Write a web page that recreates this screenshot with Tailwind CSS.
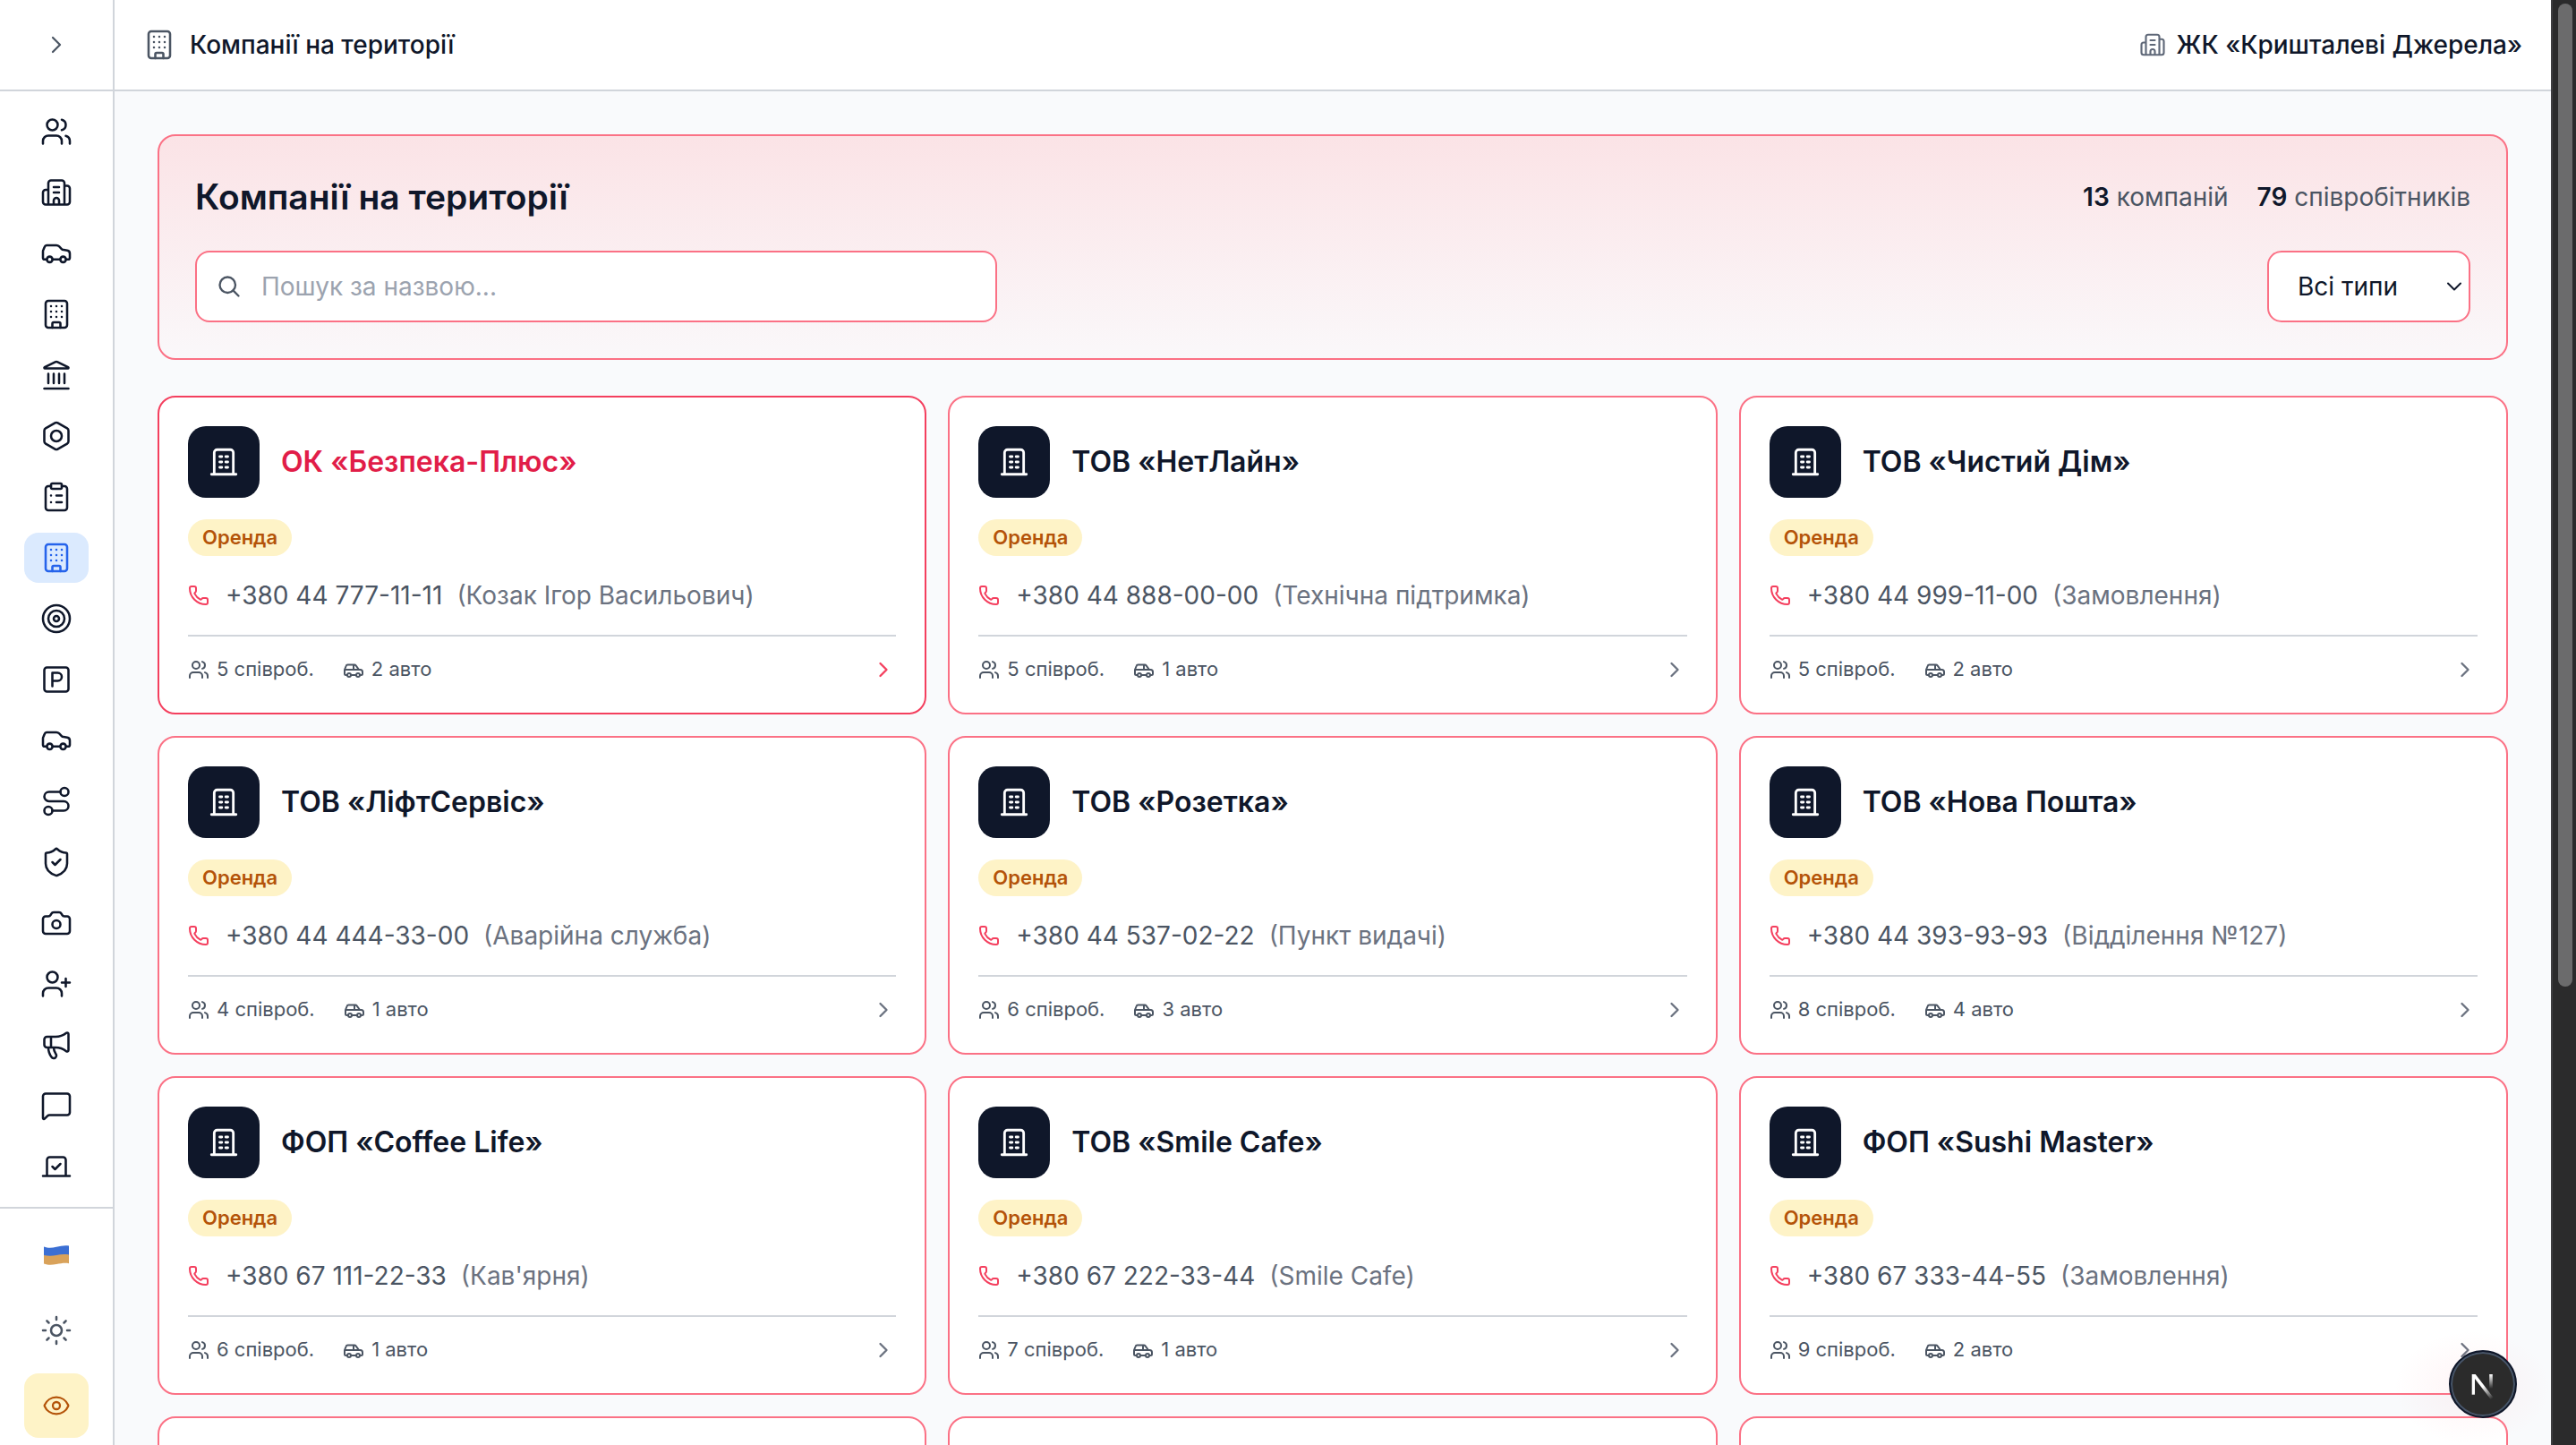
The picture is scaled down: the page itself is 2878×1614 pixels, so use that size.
<!doctype html>
<html lang="uk">

<head>
  <meta charset="UTF-8" />
  <meta name="viewport" content="width=device-width, initial-scale=1.0" />
  <title>Компанії на території</title>
  <script src="https://cdn.jsdelivr.net/npm/@tailwindcss/browser@4"></script>
</head>

<body class="flex h-screen overflow-hidden bg-[#f9fafc] font-['Inter','Noto_Sans',sans-serif] text-[28px] leading-10 text-[#0f172a]">

  <!-- Icons -->
  <svg class="hidden" xmlns="http://www.w3.org/2000/svg">
    <symbol id="i-chevron" viewBox="0 0 24 24"><path d="m9 18 6-6-6-6" /></symbol>
    <symbol id="i-chevron-down" viewBox="0 0 24 24"><path d="m6 9 6 6 6-6" /></symbol>
    <symbol id="i-search" viewBox="0 0 24 24"><circle cx="10.5" cy="10.5" r="7.5" /><path d="m21 21-5.2-5.2" /></symbol>
    <symbol id="i-users" viewBox="0 0 24 24"><circle cx="9" cy="7" r="4" /><path d="M16 21v-2a4 4 0 0 0-4-4H6a4 4 0 0 0-4 4v2M16 3.128a4 4 0 0 1 0 7.744M22 21v-2a4 4 0 0 0-3-3.87" /></symbol>
    <symbol id="i-complex" viewBox="0 0 24 24"><path d="M10 12h4M10 8h4M14 21v-3a2 2 0 0 0-4 0v3M6 10H4a2 2 0 0 0-2 2v7a2 2 0 0 0 2 2h16a2 2 0 0 0 2-2V9a2 2 0 0 0-2-2h-2M6 21V5a2 2 0 0 1 2-2h8a2 2 0 0 1 2 2v16" /></symbol>
    <symbol id="i-car-side" viewBox="0 0 24 24"><path d="M4.8 16.5H3.2A1.2 1.2 0 0 1 2 15.3v-4.6c0-.5.1-1 .3-1.4l1-2.3A1.6 1.6 0 0 1 4.7 6H12c.8 0 1.5.3 2 .8l1.9 1.9c.4.4.9.6 1.4.7l2.8.5A2.3 2.3 0 0 1 22 12.2v3.1a1.2 1.2 0 0 1-1.2 1.2h-1.6M9.2 16.5h5.6" /><circle cx="7" cy="16.5" r="2.1" /><circle cx="17" cy="16.5" r="2.1" /></symbol>
    <symbol id="i-building" viewBox="0 0 24 24"><rect x="4" y="2" width="16" height="20" rx="2" /><path d="M9 22v-3a1 1 0 0 1 1-1h4a1 1 0 0 1 1 1v3M8 6h.01M12 6h.01M16 6h.01M8 10h.01M12 10h.01M16 10h.01M8 14h.01M12 14h.01M16 14h.01" /></symbol>
    <symbol id="i-landmark" viewBox="0 0 24 24"><path d="M10 18v-7M11.12 2.198a2 2 0 0 1 1.76.006l7.866 3.847c.476.233.31.949-.22.949H3.474c-.53 0-.695-.716-.22-.949zM14 18v-7M18 18v-7M3 22h18M6 18v-7" /></symbol>
    <symbol id="i-bolt" viewBox="0 0 24 24"><path d="M21 16V8a2 2 0 0 0-1-1.73l-7-4a2 2 0 0 0-2 0l-7 4A2 2 0 0 0 3 8v8a2 2 0 0 0 1 1.73l7 4a2 2 0 0 0 2 0l7-4A2 2 0 0 0 21 16z" /><circle cx="12" cy="12" r="4" /></symbol>
    <symbol id="i-clipboard" viewBox="0 0 24 24"><rect x="8" y="2" width="8" height="4" rx="1" /><path d="M16 4h2a2 2 0 0 1 2 2v14a2 2 0 0 1-2 2H6a2 2 0 0 1-2-2V6a2 2 0 0 1 2-2h2M12 11h4M12 16h4M8 11h.01M8 16h.01" /></symbol>
    <symbol id="i-target" viewBox="0 0 24 24"><circle cx="12" cy="12" r="10" /><circle cx="12" cy="12" r="6" /><circle cx="12" cy="12" r="2" /></symbol>
    <symbol id="i-parking" viewBox="0 0 24 24"><rect x="3" y="3" width="18" height="18" rx="2" /><path d="M9 17V7h4a3 3 0 0 1 0 6H9" /></symbol>
    <symbol id="i-route" viewBox="0 0 24 24"><circle cx="6" cy="19" r="3" /><path d="M9 19h8.5a3.5 3.5 0 0 0 0-7h-11a3.5 3.5 0 0 1 0-7H15" /><circle cx="18" cy="5" r="3" /></symbol>
    <symbol id="i-shield" viewBox="0 0 24 24"><path d="M20 13c0 5-3.5 7.5-7.66 8.95a1 1 0 0 1-.67-.01C7.5 20.5 4 18 4 13V6a1 1 0 0 1 1-1c2 0 4.5-1.2 6.24-2.72a1.17 1.17 0 0 1 1.52 0C14.51 3.81 17 5 19 5a1 1 0 0 1 1 1zM9 12l2 2 4-4" /></symbol>
    <symbol id="i-camera" viewBox="0 0 24 24"><path d="M13.997 4a2 2 0 0 1 1.76 1.05l.486.9A2 2 0 0 0 18.003 7H20a2 2 0 0 1 2 2v9a2 2 0 0 1-2 2H4a2 2 0 0 1-2-2V9a2 2 0 0 1 2-2h1.997a2 2 0 0 0 1.759-1.048l.489-.904A2 2 0 0 1 10.004 4z" /><circle cx="12" cy="13" r="3" /></symbol>
    <symbol id="i-user-plus" viewBox="0 0 24 24"><path d="M16 21v-2a4 4 0 0 0-4-4H6a4 4 0 0 0-4 4v2M19 8v6M22 11h-6" /><circle cx="9" cy="7" r="4" /></symbol>
    <symbol id="i-megaphone" viewBox="0 0 24 24"><path d="M11 6a13 13 0 0 0 8.4-2.8A1 1 0 0 1 21 4v12a1 1 0 0 1-1.6.8A13 13 0 0 0 11 14H5a2 2 0 0 1-2-2V8a2 2 0 0 1 2-2zM6 14a12 12 0 0 0 2.4 7.2 2 2 0 0 0 3.2-2.4A8 8 0 0 1 10 14M8 6v8" /></symbol>
    <symbol id="i-message" viewBox="0 0 24 24"><path d="M22 17a2 2 0 0 1-2 2H6.828a2 2 0 0 0-1.414.586l-2.202 2.202A.71.71 0 0 1 2 21.286V5a2 2 0 0 1 2-2h16a2 2 0 0 1 2 2z" /></symbol>
    <symbol id="i-vote" viewBox="0 0 24 24"><path d="m9 12 2 2 4-4M5 7c0-1.1.9-2 2-2h10a2 2 0 0 1 2 2v12H5zM22 19H2" /></symbol>
    <symbol id="i-sun" viewBox="0 0 24 24"><circle cx="12" cy="12" r="4" /><path d="M12 2v2M12 20v2M4.93 4.93l1.41 1.41M17.66 17.66l1.41 1.41M2 12h2M20 12h2M6.34 17.66l-1.41 1.41M19.07 4.93l-1.41 1.41" /></symbol>
    <symbol id="i-eye" viewBox="0 0 24 24"><path d="M2.062 12.348a1 1 0 0 1 0-.696 10.75 10.75 0 0 1 19.876 0 1 1 0 0 1 0 .696 10.75 10.75 0 0 1-19.876 0" /><circle cx="12" cy="12" r="3" /></symbol>
    <symbol id="i-office" viewBox="0 0 24 24"><path d="M3.75 20.25h16.5M5.6 20.25V5.75a2 2 0 0 1 2-2h8.8a2 2 0 0 1 2 2v14.5M9.3 8.4h1.4M13.3 8.4h1.4M9.3 12h1.4M13.3 12h1.4M9.3 15.6h1.4M13.3 15.6h1.4" /></symbol>
    <symbol id="i-phone" viewBox="0 0 24 24"><path d="M13.832 16.568a1 1 0 0 0 1.213-.303l.355-.465A2 2 0 0 1 17 15h3a2 2 0 0 1 2 2v3a2 2 0 0 1-2 2A18 18 0 0 1 2 4a2 2 0 0 1 2-2h3a2 2 0 0 1 2 2v3a2 2 0 0 1-.8 1.6l-.468.351a1 1 0 0 0-.292 1.233 14 14 0 0 0 6.392 6.384" /></symbol>
    <symbol id="i-car" viewBox="0 0 24 24"><circle cx="7" cy="18" r="2" /><circle cx="17" cy="18" r="2" /><path d="M5 18H3.5A1.5 1.5 0 0 1 2 16.5V12l1.6-4A2 2 0 0 1 5.5 6.5H13a2 2 0 0 1 1.6.8L18 12h1.5a2.5 2.5 0 0 1 2.5 2.5v2a1.5 1.5 0 0 1-1.5 1.5H19M15 18H9M2 12h16M12 12V6.5" /></symbol>
  </svg>

  <!-- Sidebar -->
  <aside class="flex w-32 shrink-0 flex-col border-r-2 border-[#d1d5db] bg-white">
    <div class="flex h-[102px] shrink-0 items-center justify-center border-b-2 border-[#d1d5db]">
      <button type="button" aria-label="Розгорнути меню" class="text-[#4b5563]">
        <svg class="size-8 fill-none stroke-current stroke-[1.7]" stroke-linecap="round" stroke-linejoin="round"><use href="#i-chevron" /></svg>
      </button>
    </div>
    <nav id="menu" class="flex flex-1 flex-col items-center justify-center gap-3"></nav>
    <div class="flex flex-col items-center gap-3 border-t-2 border-[#d1d5db] pt-4 pb-2">
      <button type="button" aria-label="Українська" class="flex size-18 items-center justify-center rounded-2xl">
        <svg class="h-6 w-7" viewBox="0 0 28 24">
          <path fill="#3b6fd4" d="M0 2.5c5 2 9 1.5 14 .3S23.500.6 28 1.500V12c-4.500-.8-9 .2-14 1.200s-9 1-14 0z" />
          <path fill="#d9a25a" d="M0 12c5 1 9 1 14 0s9.500-1.200 14-.4v9.600c-4.500-1-9 0-14 .9s-9 1.300-14-.6z" />
        </svg>
      </button>
      <button type="button" aria-label="Світла тема" class="flex size-18 items-center justify-center rounded-2xl text-[#4b5563]">
        <svg class="size-9 fill-none stroke-current stroke-[1.7]" stroke-linecap="round" stroke-linejoin="round"><use href="#i-sun" /></svg>
      </button>
      <button type="button" aria-label="Режим перегляду" class="flex size-18 items-center justify-center rounded-2xl bg-[#fef3c7] text-[#b45309]">
        <svg class="size-8 fill-none stroke-current stroke-[1.7]" stroke-linecap="round" stroke-linejoin="round"><use href="#i-eye" /></svg>
      </button>
    </div>
  </aside>

  <div class="flex min-w-0 flex-1 flex-col">
    <header class="flex h-[102px] shrink-0 items-center justify-between border-b-2 border-[#d1d5db] bg-white px-8 font-medium">
      <div class="flex items-center gap-4">
        <svg class="size-9 fill-none stroke-[#4b5563] stroke-[1.7]" stroke-linecap="round" stroke-linejoin="round"><use href="#i-building" /></svg>
        <span>Компанії на території</span>
      </div>
      <div class="flex items-center gap-3">
        <svg class="size-[30px] fill-none stroke-[#5f6878] stroke-[1.7]" stroke-linecap="round" stroke-linejoin="round"><use href="#i-complex" /></svg>
        <span>ЖК «Кришталеві Джерела»</span>
      </div>
    </header>

    <main class="min-h-0 flex-1 overflow-hidden p-12">
      <!-- Filters -->
      <section class="rounded-[20px] border-2 border-[#fb7185] bg-linear-to-b from-[#fbe3e6] to-[#faf8fa] p-10">
        <div class="flex items-center justify-between">
          <h1 class="text-[39px] leading-14 font-semibold">Компанії на території</h1>
          <div class="flex gap-8 text-[#4b5563]">
            <span><b class="font-semibold text-[#0f172a]">13</b> компаній</span>
            <span><b class="font-semibold text-[#0f172a]">79</b> співробітників</span>
          </div>
        </div>
        <form class="mt-8 flex items-center justify-between">
          <div class="relative w-full max-w-4xl">
            <svg class="absolute top-[26px] left-6 size-7 fill-none stroke-[#4b5563] stroke-2" stroke-linecap="round" stroke-linejoin="round"><use href="#i-search" /></svg>
            <input type="text" id="search" aria-label="Пошук за назвою" placeholder="Пошук за назвою..."
              class="block h-20 w-full rounded-2xl border-2 border-[#fb7185] bg-white pr-6 pl-[72px] placeholder:text-[#9ca3af]" />
          </div>
          <div class="relative">
            <select id="type" aria-label="Тип компанії"
              class="block h-20 w-[227px] appearance-none rounded-2xl border-2 border-[#fb7185] bg-white pl-8">
              <option>Всі типи</option>
            </select>
            <svg class="pointer-events-none absolute top-[26px] right-1 size-7 fill-none stroke-current stroke-[1.7]" stroke-linecap="round" stroke-linejoin="round"><use href="#i-chevron-down" /></svg>
          </div>
        </form>
      </section>

      <!-- Companies -->
      <div id="companies" class="mt-10 grid grid-cols-3 gap-6"></div>
    </main>
  </div>

  <!-- Scrollbar -->
  <div class="w-7 shrink-0 border-l-2 border-[#3d3d40] bg-[#2b2b2c] pt-1 pl-1.5">
    <div class="h-[68vh] w-4 rounded-full bg-[#6b6b6c]"></div>
  </div>

  <!-- Dev tools button -->
  <div class="pointer-events-none absolute right-7 bottom-0 h-32 w-44 bg-radial from-[#fb7185]/8 to-transparent to-70%"></div>
  <button type="button" aria-label="Next.js" class="absolute right-[66px] bottom-[30px] flex size-19 items-center justify-center rounded-full border-2 border-[#0f172a] bg-[#2b2b2b] ring-2 ring-[#475569] ring-inset">
    <svg class="size-10 fill-none" viewBox="0 0 40 40">
      <defs>
        <linearGradient id="n-diag" x1="21" y1="22" x2="31" y2="36" gradientUnits="userSpaceOnUse"><stop stop-color="#fff" /><stop offset="1" stop-color="#fff" stop-opacity="0" /></linearGradient>
        <linearGradient id="n-bar" x1="0" y1="9" x2="0" y2="25" gradientUnits="userSpaceOnUse"><stop stop-color="#fff" /><stop offset="1" stop-color="#fff" stop-opacity="0" /></linearGradient>
      </defs>
      <path d="M7.7 9h4l20 26-2.8 2.2L11 14v17.700H7.700z" fill="url(#n-diag)" />
      <path d="M27.200 9h3.600v16h-3.600z" fill="url(#n-bar)" />
    </svg>
  </button>

  <script>
    const menu = [
      ['users', 'Мешканці'], ['complex', 'Комплекс'], ['car-side', 'Авто'], ['building', 'Будинки'],
      ['landmark', 'Управління'], ['bolt', 'Обладнання'], ['clipboard', 'Заявки'], ['building', 'Компанії'],
      ['target', 'Зони'], ['parking', 'Паркінг'], ['car-side', 'Транспорт'], ['route', 'Маршрути'],
      ['shield', 'Охорона'], ['camera', 'Камери'], ['user-plus', 'Гості'], ['megaphone', 'Оголошення'],
      ['message', 'Повідомлення'], ['vote', 'Голосування'],
    ];
    const activeItem = 7;

    const companies = [
      ['ОК «Безпека-Плюс»', '+380 44 777-11-11', 'Козак Ігор Васильович', 5, 2],
      ['ТОВ «НетЛайн»', '+380 44 888-00-00', 'Технічна підтримка', 5, 1],
      ['ТОВ «Чистий Дім»', '+380 44 999-11-00', 'Замовлення', 5, 2],
      ['ТОВ «ЛіфтСервіс»', '+380 44 444-33-00', 'Аварійна служба', 4, 1],
      ['ТОВ «Розетка»', '+380 44 537-02-22', 'Пункт видачі', 6, 3],
      ['ТОВ «Нова Пошта»', '+380 44 393-93-93', 'Відділення №127', 8, 4],
      ['ФОП «Coffee Life»', '+380 67 111-22-33', "Кав'ярня", 6, 1],
      ['ТОВ «Smile Cafe»', '+380 67 222-33-44', 'Smile Cafe', 7, 1],
      ['ФОП «Sushi Master»', '+380 67 333-44-55', 'Замовлення', 9, 2],
    ];

    const icon = (name, cls) =>
      `<svg class="shrink-0 fill-none stroke-current ${cls}" stroke-linecap="round" stroke-linejoin="round"><use href="#i-${name}" /></svg>`;

    document.getElementById('menu').innerHTML = menu.map(([name, label], i) => `
      <a href="#" aria-label="${label}" class="flex h-14 w-18 items-center justify-center rounded-2xl ${i === activeItem ? 'bg-[#dbeafe] text-[#2563eb]' : ''}">
        ${icon(name, 'size-9 stroke-[1.7]')}
      </a>`).join('');

    const card = ([name, phone, contact, staff, cars], i) => `
      <article class="rounded-[20px] border-2 bg-white p-8 ${i === 0 ? 'border-[#f43f5e]' : 'border-[#fb7185]'}">
        <div class="flex items-center gap-6">
          <div class="flex size-20 shrink-0 items-center justify-center rounded-[20px] bg-[#0f172a] text-white">${icon('office', 'size-10 stroke-[1.7]')}</div>
          <h2 class="text-[32px] font-semibold ${i === 0 ? 'text-[#e11d48]' : ''}">${name}</h2>
        </div>
        <div class="mt-6 flex">
          <span class="rounded-full bg-[#fef3c7] px-4 py-1 text-[22px] leading-[33px] font-semibold text-[#b45309]">Оренда</span>
        </div>
        <div class="mt-6 flex items-center text-[#4b5563]">
          <span class="mr-[18px] text-[#f43f5e]">${icon('phone', 'size-6 stroke-2')}</span>
          <span>${phone}</span>
          <span class="ml-4 text-[#6b7280]">(${contact})</span>
        </div>
        <div class="mt-6 flex items-center gap-8 border-t-2 border-[#d1d5db] pt-5 text-[22px] leading-[33px] text-[#4b5563]">
          <span class="flex items-center gap-2">${icon('users', 'size-6 stroke-2')}${staff} співроб.</span>
          <span class="flex items-center gap-2">${icon('car', 'size-6 stroke-2')}${cars} авто</span>
          <span class="ml-auto ${i === 0 ? 'text-[#f43f5e]' : 'text-[#6b7280]'}">${icon('chevron', 'size-7 stroke-2')}</span>
        </div>
      </article>`;

    // placeholders for the row that is still loading
    const placeholder = '<div class="h-80 rounded-[20px] border-2 border-[#fb7185] bg-white"></div>';

    document.getElementById('companies').innerHTML = companies.map(card).join('') + placeholder.repeat(3);
  </script>
</body>

</html>
